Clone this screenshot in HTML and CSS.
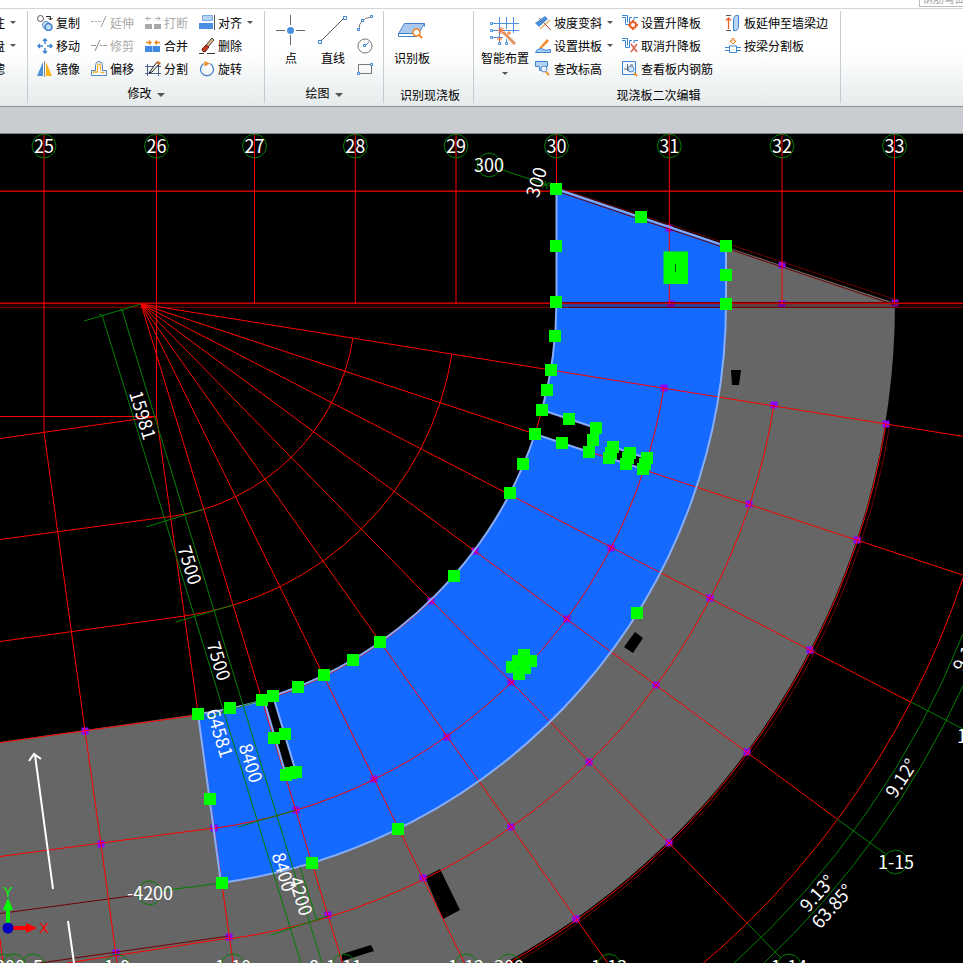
FILE: index.html
```html
<!DOCTYPE html>
<html lang="zh-CN">
<head>
  <meta charset="UTF-8" />
  <title>现浇板二次编辑</title>
  <link rel="stylesheet" href="styles.css">
</head>
<body>
  <div class="tab-strip"><span class="tab-tip">钢筋弯曲</span></div>

  <header class="ribbon">
    <section class="panel panel-cut">
      <div class="rows">
        <button class="tool">注<i class="caret"></i></button>
        <button class="tool">盘<i class="caret"></i></button>
        <button class="tool no-caret">滤</button>
      </div>
    </section>

    <section class="panel panel-modify">
      <div class="grid">
        <button class="tool"><svg viewBox="0 0 16 16"><circle cx="3.5" cy="3.5" r="3" fill="#fff" stroke="#555"/><path d="M9 1.500h4.500v3M11.500 3l2 2 2-2" fill="none" stroke="#222"/><circle cx="9" cy="10" r="3.500" fill="#dcebfa" stroke="#4a86c8"/><circle cx="11.500" cy="12" r="3.500" fill="#b9dcf7" stroke="#3a7fcb" stroke-width="1.500"/></svg>复制</button>
        <button class="tool" disabled><svg viewBox="0 0 16 16"><path d="M0 6.500h3M4 6.500h2M7 6.500h3" stroke="#b0b0b0"/><path d="M15 1l-5 11" stroke="#999"/></svg>延伸</button>
        <button class="tool" disabled><svg viewBox="0 0 16 16"><path d="M0 9h7v5H0zM9 9h7v5H9z" fill="#a9a9a9"/><path d="M1 3.500h5M3 1.500l-2 2 2 2M10 3.500h5M13 1.500l2 2-2 2" fill="none" stroke="#a9a9a9"/></svg>打断</button>
        <button class="tool"><svg viewBox="0 0 16 16"><path d="M3.500.500h10v5h-10z" fill="#b5d4f3" stroke="#72a9e0"/><path d="M0 8h14v6H0z" fill="#4a90e2"/><path d="M15.500 0v15" stroke="#555"/></svg>对齐<i class="caret"></i></button>

        <button class="tool"><svg viewBox="0 0 16 16"><path d="M8 1v5M8 10v5M1 8h5M10 8h5M6 3l2-2 2 2M6 13l2 2 2-2M3 6L1 8l2 2M13 6l2 2-2 2" fill="none" stroke="#3d86d6" stroke-width="1.500"/></svg>移动</button>
        <button class="tool" disabled><svg viewBox="0 0 16 16"><path d="M0 7.500h5M9 7.500h2M12 7.500h4" stroke="#999"/><path d="M9 2L4 13" stroke="#888"/></svg>修剪</button>
        <button class="tool"><svg viewBox="0 0 16 16"><path d="M0 8h15v6H0z" fill="#3f8ae0"/><path d="M7.500 8v6" stroke="#9cc7f5"/><path d="M1 4.500h5M4 2.500l2 2-2 2M15 4.500h-5M12 2.500l-2 2 2 2" fill="none" stroke="#e88a1a" stroke-width="1.300"/></svg>合并</button>
        <button class="tool"><svg viewBox="0 0 16 16"><path d="M0 15.500h5M8 15.500h8" stroke="#333"/><path d="M7 7l6-7 2 2-6 7z" fill="#e0b584" stroke="#444"/><path d="M3 11l4-4 3 2-4 5q-3 0-3-3z" fill="#c83c28" stroke="#6a2015"/></svg>删除</button>

        <button class="tool"><svg viewBox="0 0 16 16"><path d="M6 1v14H0z" fill="#4a90d9"/><path d="M7.500 0v16" stroke="#888"/><path d="M9 1v14h6z" fill="#fdb515"/></svg>镜像</button>
        <button class="tool"><svg viewBox="0 0 16 16"><path d="M.500 14.500v-5h4V4.500q0-4 3.500-4t3.500 4v5h4v5z" fill="#fff" stroke="#4a86c8"/><path d="M2.500 12.500v-1.500h4V5q0-2 1.500-2t1.500 2v4.500M9.500 11.500h4" fill="none" stroke="#f0b030" stroke-width="1.300"/></svg>偏移</button>
        <button class="tool"><svg viewBox="0 0 16 16"><path d="M0 5.500h16M0 12.500h16M2.500 3v12M13.500 3v12" stroke="#4b5f8a"/><path d="M4 12l8-11 3 1-8 9z" fill="#f5f5f5" stroke="#222"/><path d="M11 2l2-2 3 2-2 2z" fill="#c87832"/></svg>分割</button>
        <button class="tool"><svg viewBox="0 0 16 16"><path d="M11 2.500a6.500 6.500 0 1 1-6 0" fill="none" stroke="#4a86c8" stroke-width="1.300"/><path d="M5.500 0l5.500 2.500-5.500 3z" fill="#f08a24"/></svg>旋转</button>
      </div>
      <h3 class="caption">修改<i class="caret"></i></h3>
    </section>

    <section class="panel panel-draw">
      <div class="bigs">
        <button class="big"><svg viewBox="0 0 30 30"><path d="M14.500 0v10M14.500 20v10M0 15.500h9M20 15.500h9" stroke="#666"/><circle cx="14.500" cy="15.500" r="3.500" fill="#4a90e2"/></svg>点</button>
        <button class="big"><svg viewBox="0 0 30 30"><path d="M3 26L26 3" stroke="#555"/><path d="M.500 25.500h3v3h-3zM25.500 1.500h3v3h-3z" fill="#fff" stroke="#3d86d6"/></svg>直线</button>
        <div class="minis">
          <button class="mini" aria-label="圆弧"><svg viewBox="0 0 16 16"><path d="M2 14Q2 4 14 2" fill="none" stroke="#777"/><path d="M.500 13.500h2v2h-2zM4.500 4.500h2v2h-2zM13.500.500h2v2h-2z" fill="#fff" stroke="#3d86d6"/></svg></button>
          <button class="mini" aria-label="圆"><svg viewBox="0 0 16 16"><circle cx="8" cy="8" r="7" fill="none" stroke="#777"/><path d="M8 8l4-4" stroke="#3d86d6"/><path d="M6.500 6.500h2v2h-2z" fill="#fff" stroke="#3d86d6"/></svg></button>
          <button class="mini" aria-label="矩形"><svg viewBox="0 0 16 16"><path d="M1.500 3.500h13v9h-13z" fill="none" stroke="#777"/><path d="M.500 11.500h2v2h-2zM13.500 2.500h2v2h-2z" fill="#fff" stroke="#3d86d6"/></svg></button>
        </div>
      </div>
      <h3 class="caption">绘图<i class="caret"></i></h3>
    </section>

    <section class="panel panel-detect">
      <div class="bigs">
        <button class="big"><svg viewBox="0 0 30 30"><path d="M7.500 8.500h20l-6 10H1.500z" fill="#a9c9ee" stroke="#3f83cf"/><path d="M1.500 18.500v3H20M27.500 8.500v3" fill="none" stroke="#3f83cf"/><circle cx="19.500" cy="17.500" r="3.500" fill="#fff" stroke="#f58220" stroke-width="1.500"/><path d="M22 20l3 3" stroke="#f58220" stroke-width="2"/></svg>识别板</button>
      </div>
      <h3 class="caption low">识别现浇板</h3>
    </section>

    <section class="panel panel-edit">
      <div class="bigs">
        <button class="big"><svg viewBox="0 0 30 30"><path d="M3 8.500h26M3 15.500h26M3 22.500h10M9.500 2v26M16.500 2v12M23.500 2v16M16.500 24v4" stroke="#4a90e2"/><path d="M.500 7.500h2v2h-2zM.500 14.500h2v2h-2zM.500 21.500h2v2h-2zM8.500 27.500h2v2h-2zM15.500 27.500h2v2h-2z" fill="#fff" stroke="#4a90e2"/><path d="M13 17l12 12" stroke="#dc9560" stroke-width="3"/><path d="M11 12v7M7.500 15.500h7M8.500 13l5 5M13.500 13l-5 5M7 24h5M9.500 22v5M19 16v4M17 18h4" stroke="#f0662a"/></svg>智能布置<i class="caret"></i></button>
      </div>
      <div class="grid">
        <button class="tool"><svg viewBox="0 0 16 16"><path d="M0 8L10 1l3 3L4 12z" fill="#4a90d9"/><path d="M4 3l10 10" stroke="#777"/><path d="M15 5L5 14" stroke="#e0b060" stroke-width="1.500"/><path d="M10 9l6 6" stroke="#c84a30"/></svg>坡度变斜<i class="caret"></i></button>
        <button class="tool"><svg viewBox="0 0 16 16"><path d="M0 2.500h3.500v7h4v-7H10M12 5V2.500h4M0 .500h5.500v7" fill="none" stroke="#3d86d6"/><circle cx="11" cy="10" r="3" fill="none" stroke="#e8622a" stroke-width="2"/><path d="M11 5v2M11 13v2M6 10h2M14 10h2" stroke="#e8622a" stroke-width="2"/></svg>设置升降板</button>
        <button class="tool"><svg viewBox="0 0 16 16"><path d="M1 .500h5M1 15.500h5" stroke="#555"/><path d="M3.500 14V3M1 5.500L3.500 3 6 5.500" fill="none" stroke="#e8622a" stroke-width="1.300"/><path d="M8.500 3.500l2-3h3v12l-2 3h-3z" fill="#b9d6f6" stroke="#3d86d6"/></svg>板延伸至墙梁边</button>

        <button class="tool"><svg viewBox="0 0 16 16"><path d="M5 9l7-8 2 2-7 7H4z" fill="#f58a2a"/><path d="M.500 14.500q1-4 5.500-4 5 3 9.500 1v3z" fill="#a8ccf2" stroke="#3d86d6"/></svg>设置拱板<i class="caret"></i></button>
        <button class="tool"><svg viewBox="0 0 16 16"><path d="M0 2.500h3.500v7h4v-7H10M12 5V2.500h4M0 .500h5.500v7" fill="none" stroke="#3d86d6"/><path d="M9 6l6 8M15 6l-6 8" stroke="#e0604a" stroke-width="1.500"/></svg>取消升降板</button>
        <button class="tool"><svg viewBox="0 0 16 16"><path d="M0 9.500h4M12 9.500h4M0 12.500h4M12 12.500h4M4.500 8v6.500h7V8z" fill="none" stroke="#3d86d6"/><path d="M7 .500h2v2.500h2L8 6 5 3h2z" fill="#fff" stroke="#f0801e"/></svg>按梁分割板</button>

        <button class="tool"><svg viewBox="0 0 16 16"><path d="M.500.500h12v5h-2v4h-6v-4h-4z" fill="#b5d2f3" stroke="#3d86d6"/><circle cx="9" cy="8" r="3" fill="#e8f2fc" stroke="#5a8ac0"/><path d="M11 11l3 3" stroke="#f0941e" stroke-width="2"/></svg>查改标高</button>
        <button class="tool"><svg viewBox="0 0 16 16"><path d="M.500.500h13v13H.500z" fill="#f4f9ff" stroke="#3d86d6"/><path d="M2 8h5M5.500 3v7M8 4h3" stroke="#666"/><circle cx="9" cy="8" r="3" fill="#cfe3f8" stroke="#5a8ac0"/><path d="M12 12l3 3" stroke="#f0941e" stroke-width="2"/></svg>查看板内钢筋</button>
      </div>
      <h3 class="caption low">现浇板二次编辑</h3>
    </section>
  </header>

  <div class="sub-bar"></div>

  <main class="canvas">
    <svg class="drawing" viewBox="0 134 963 829" preserveAspectRatio="xMinYMin slice">
      <!-- slabs -->
      <path class="slab" d="M0 742L198 714A415 415 0 0 0 556 304V190L895 303A754 754 0 0 1 505 963H0z"/>
      <path class="hole" d="M731 370h10l-2 15h-7zM635 632l8 6-10 15-9-6zM425 877l15-8 20 41-17 9zM342 954l29-9 3 6-32 10z"/>
      <path class="hole" d="M535 434L542 410 596 428 589 452zM613 447L646 458 643 469 609 458zM262 699L273 695 296 772 286 775z"/>
      <path class="picked" d="M556.500 189L726 246V304A585 585 0 0 1 221 883L198 714A415 415 0 0 0 264 700L286 775 296 772 273 696A415 415 0 0 0 535 434L589 452 609 458 643 469 646 458 613 447 609 458 589 452 596 428 542 410A415 415 0 0 0 556.500 302z"/>
      <g id="nodes" class="node"></g>

      <!-- axis grid -->
      <path class="axis-band" d="M0 304H963V307H0z"/>
      <g class="axis-dark">
        <path d="M0 190.500H963M0 302.500H963M0 307.500H963M556 187L897 300M556 191L895 305M0 913.500L138 895M40 963L229 936"/>
        <path d="M890 424A758 758 0 0 1 511 965"/>
      </g>
      <g class="axis-mid"><path d="M0 191.500H963M0 303.500H963"/></g>
      <g id="axes" class="axis"></g>
      <g class="axis">
        <path d="M0 416.500H156.500M0 438.500L156.500 416.500M0 539.500L170.500 516.500M0 641.500L184.500 616M0 742.500L198 715M0 856.500L214 828M67 963L229 938"/>
        <path d="M44 432L85 731 101 844 117 963M156.500 416L233 963M0 939L3 963"/>
      </g>
      <path class="picked-edge" d="M542 410A415 415 0 0 0 556.500 302V189L726 246V304A585 585 0 0 1 221 883L198 714A415 415 0 0 0 264 700L286 775M296 772L273 696A415 415 0 0 0 535 434L589 452M596 428L542 410M613 447L646 458 643 469 609 458z"/>

      <!-- dimensions -->
      <g class="dim">
        <path d="M84 321L141 304M102 315L301 963M122 310L322 963M300 867L317 921"/>
        <path d="M146 527L204 509M176 622L233 605M205 718L262 700M238 827L296 810M271 935L328 916"/>
        <path d="M99 314l5 2M120 309l4 2M500 169L556 188M545 181l2 8M542 187l8-5M160 891L221 883"/>
        <path d="M963 634A886 886 0 0 1 732 965M963 686A906 906 0 0 1 762 965"/>
        <path d="M911 702L963 729M837 819L887 855M747 923L781 958"/>
      </g>

      <g id="bubbles" class="dim"></g>
      <g id="labels" class="label"></g>
      <g id="grips" class="grip"></g>
      <path class="grip" d="M663.500 251.500h24.500v32.500h-24.500z"/>
      <path class="grip-mark" d="M675.500 264v8"/>

      <!-- span arrows -->
      <path class="arrow" d="M53 889L35 755M29 761L34 754 41 759M68 921L74 963"/>

      <!-- ucs icon -->
      <path d="M6 928V910H3L8 898 13 910H10V928z" fill="#0f0"/>
      <path d="M8 926H26V923L37 928 26 933V930H8z" fill="#f00"/>
      <circle cx="8" cy="928" r="5.500" fill="#0000c0"/>
      <text class="ucs" x="8" y="897" fill="#0f0">Y</text>
      <text class="ucs" x="44" y="933" fill="#f00">X</text>
    </svg>
  </main>

  <script>
    const cx = 141, cy = 304;

    const grips = [
      [556,189],[641,217],[726,246],[726,275],[726,304],[556,246],[556,302],[555,336],[551,370],
      [547,390],[542,410],[569,419],[596,428],[593,440],[589,452],[562,443],[535,434],[523,464],
      [510,493],[454,576],[380,642],[353,660],[324,675],[298,687],[273,696],[262,700],[230,708],
      [198,714],[210,799],[222,883],[312,863],[398,829],[637,613],[285,734],[274,738],[296,772],
      [291,773],[286,775],[613,447],[611,453],[609,458],[630,453],[628,458],[626,464],[647,458],
      [645,464],[643,469],[524,655],[531,661],[518,661],[525,662],[512,667],[519,674],[525,668]
    ];

    const nodes = [
      [669,228],[671,304],[782,265],[782,304],[895,303],[664,388],[774,405],[886,424],[749,504],
      [857,540],[611,548],[710,598],[810,650],[567,619],[656,685],[747,752],[511,682],[589,762],
      [669,843],[447,737],[511,827],[576,919],[374,779],[423,878],[296,810],[328,915],[214,828],
      [229,937],[85,731],[101,844],[116,953],[475,551],[431,601]
    ];

    // top axes: number, x, bottom end
    const tops = [
      [25,44,432],[26,156.5,416],[27,254.5,304],[28,355.3,304],[29,456,304],
      [30,556.5,189],[31,669.3,304],[32,782,304],[33,894.5,304]
    ];

    const rays = [9.15, 18.25, 27.35, 36.5, 45.6, 54.7, 63.85, 73];
    const radii = [214.7, 315, 415, 529.5, 641, 754.6, 866.5];

    // text, x, y, rotation
    const labels = [
      ["300",489,165,0],["300",536,182,-73],["15981",143,415,73],["7500",190,565,73],
      ["7500",219,661,73],["64581",220,733,73],["8400",251,763,73],["8400",284,872,73],
      ["4200",301,896,73],["-4200",150,893,0],["9.12°",901,778,-57],["9.13°",817,893,-48],
      ["63.85°",832,906,-48],["9.12°",967,651,-63],["1-15",896,862,0],["1-16",975,736,0],
      ["1-14",789,967,0],["1-13",609,967,0],["300",509,967,0],["1-12",466,967,0],
      ["1-11",344,967,0],["8",314,967,0],["1-10",233,967,0],["1-9",117,967,0],["300",10,967,0],["5",38,967,0]
    ];

    const bubbles = [
      [489,165],[149.5,893],[895.5,862],[974,736],[789,966],[609,966],[509,966],[466,966],
      [344,966],[233,966],[117,966],[3,966],[14,966],[33,966]
    ];

    function polar(r, deg, x = cx, y = cy) {
      const a = deg * Math.PI / 180;
      return (x + r * Math.cos(a)).toFixed(1) + " " + (y + r * Math.sin(a)).toFixed(1);
    }

    function fill(id, html) {
      document.getElementById(id).innerHTML = html;
    }

    function squares(list, size) {
      return list.map(([x, y]) => `<rect x="${x - size / 2}" y="${y - size / 2}" width="${size}" height="${size}"/>`).join("");
    }

    // axis bubbles are drawn with 12 sides
    function bubble([x, y]) {
      let pts = [];
      for (let a = 30; a <= 360; a += 30) pts.push(polar(12, a, x, y));
      return `<polygon points="${pts.join(" ")}"/>`;
    }

    function drawAxes() {
      let d = "";
      tops.forEach(([, x, end]) => d += `M${x} 134V${end}`);
      rays.forEach(a => d += `M${cx} ${cy}L${polar(866.5, a)}`);
      radii.forEach(r => d += `M${polar(r, 9.15)}A${r} ${r} 0 0 1 ${polar(r, 82.07)}`);
      fill("axes", `<path d="${d}"/>`);
    }

    function drawLabels() {
      const all = tops.map(([n, x]) => [n, x, 146, 0]).concat(labels);
      fill("labels", all.map(([t, x, y, rot]) =>
        `<text transform="translate(${x} ${y}) rotate(${rot})" y="7">${t}</text>`).join(""));
      fill("bubbles", tops.map(([, x]) => [x, 146]).concat(bubbles).map(bubble).join(""));
    }

    drawAxes();
    drawLabels();
    fill("nodes", squares(nodes, 7));
    fill("grips", squares(grips, 12));
  </script>
</body>
</html>
```
FILE: styles.css
```css
:root {
  --text: #000;
  --line: #c8ccd0;
  --red: #ff0000;
  --green: #008000;
  --picked: #146aff;
  --slab: #666;
}

* {
  box-sizing: border-box;
}

body {
  margin: 0;
  height: 100vh;
  display: flex;
  flex-direction: column;
  overflow: hidden;
  background: #000;
  color: var(--text);
  font-family: "Noto Sans CJK SC", sans-serif;
  font-size: 12px;
}

.tab-strip {
  flex: none;
  height: 9px;
  display: flex;
  justify-content: flex-end;
  align-items: flex-end;
  overflow: hidden;
  background: #fff;
  border-bottom: 1px solid #d5d5d5;
}

.tab-tip {
  width: 44px;
  height: 20px;
  margin-bottom: 1px;
  padding-left: 2px;
  line-height: 20px;
  border: 1px solid #bbb;
  border-right: 0;
  color: #aaa;
  font-size: 11px;
  white-space: nowrap;
  overflow: hidden;
}

.ribbon {
  flex: none;
  height: 98px;
  display: flex;
  background: linear-gradient(#fff 45%, #e6ebec);
  border-bottom: 1px solid #8a8f94;
}

.panel {
  height: 92px;
  margin-top: 2px;
  display: grid;
  grid-template-rows: 71px 1fr;
  border-right: 1px solid var(--line);
}

.panel-cut {
  width: 28px;
  padding-right: 11px;
  justify-content: end;
  overflow: hidden;
}

.panel-modify {
  width: 237px;
}

.panel-draw {
  width: 119px;
}

.panel-detect {
  width: 90px;
}

.panel-edit {
  width: 367px;
  grid-template-columns: 61px 1fr;
}

button {
  display: flex;
  align-items: center;
  padding: 0;
  border: none;
  background: none;
  color: inherit;
  font: inherit;
  white-space: nowrap;
  cursor: pointer;
}

button:disabled {
  color: #aaa;
}

.rows {
  display: grid;
  grid-template-rows: repeat(3, 23px);
  justify-items: end;
}

.no-caret {
  margin-right: 11px;
}

.grid {
  display: grid;
  grid-template-rows: repeat(3, 23px);
}

.panel-modify .grid {
  grid-template-columns: repeat(4, 54px);
  padding-left: 9px;
}

.panel-edit .grid {
  grid-template-columns: 87px 103px 1fr;
}

.tool svg {
  flex: none;
  width: 16px;
  height: 16px;
  margin-right: 3px;
}

.caret {
  display: inline-block;
  flex: none;
  margin-left: 5px;
  border: 3px solid transparent;
  border-top-color: #555;
  border-bottom: 0;
}

.caption .caret {
  border-width: 4px;
  border-bottom: 0;
  vertical-align: middle;
}

.bigs {
  display: flex;
  align-items: flex-start;
}

.panel-draw .bigs {
  padding-left: 5px;
}

.panel-detect .bigs {
  padding-left: 7px;
}

.panel-edit .bigs {
  padding-left: 7px;
}

.big {
  flex-direction: column;
  min-width: 42px;
  padding-top: 4px;
}

.big svg {
  width: 30px;
  height: 30px;
  margin-bottom: 4px;
}

.big .caret {
  margin: 6px 0 0;
}

.minis {
  display: grid;
  grid-template-rows: repeat(3, 23px);
  margin-left: 3px;
}

.mini svg {
  width: 16px;
  height: 16px;
}

.caption {
  grid-column: 1 / -1;
  margin: 0;
  padding-top: 2px;
  font-size: 12px;
  font-weight: normal;
  line-height: 18px;
  text-align: center;
}

.caption.low {
  padding: 4px 0 0 3px;
}

.sub-bar {
  flex: none;
  height: 27px;
  background: #c9ccd1;
  border-bottom: 1px solid #85888f;
}

.canvas {
  flex: 1;
  min-height: 0;
  background: #000;
}

.drawing {
  display: block;
  width: 100%;
  height: 100%;
}

.slab {
  fill: var(--slab);
}

.hole {
  fill: #000;
}

.picked {
  fill: var(--picked);
}

.picked-edge {
  fill: none;
  stroke: #86adf8;
  stroke-width: 2;
}

.node {
  fill: #8c00ff;
}

.axis, .axis-mid, .axis-dark, .dim {
  fill: none;
  stroke-width: 1;
}

.axis {
  stroke: var(--red);
}

.axis-mid {
  stroke: #c80000;
}

.axis-dark {
  stroke: #700000;
}

.axis-band {
  fill: #500000;
  fill-opacity: 0.4;
}

.dim {
  stroke: var(--green);
}

.grip {
  fill: #00ff00;
}

.grip-mark {
  stroke: #006000;
}

.arrow {
  fill: none;
  stroke: #fff;
  stroke-width: 2;
}

.label {
  fill: #fff;
  font-size: 18px;
  text-anchor: middle;
}

.ucs {
  font-family: "Liberation Sans", sans-serif;
  font-size: 14px;
  text-anchor: middle;
}
```
